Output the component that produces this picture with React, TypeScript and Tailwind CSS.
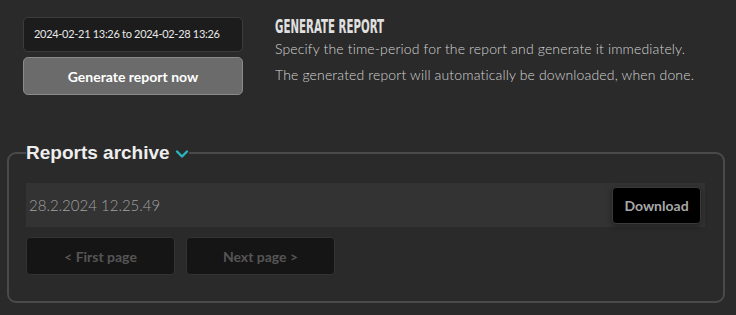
export default function App() {
  return (
    <div className="w-[736px] h-[315px] bg-[#2a2a2a] overflow-hidden" style={{ fontFamily: 'Lato, "Open Sans", sans-serif' }}>
      <div className="flex pl-[23px] pt-[17px]">
        <div className="flex flex-col gap-[5px] w-[220px]">
          <div className="h-[35px] flex items-center px-[10px] bg-[#1c1c1c] border border-[#3c3c3c] rounded-[5px] text-[11px] tracking-[-0.3px] whitespace-nowrap text-[#e8e8e8]">
            2024-02-21 13:26 to 2024-02-28 13:26
          </div>
          <button className="h-[38px] bg-[#6b6b6b] border border-[#8a8a8a] rounded-[5px] text-[14px] font-bold text-white">
            Generate report now
          </button>
        </div>
        <div className="ml-[32px]">
          <h2
            className="text-[19px] leading-[18px] font-bold text-[#e0e0e0] uppercase whitespace-nowrap"
            style={{ fontFamily: '"DejaVu Sans Condensed", "Liberation Sans Narrow", sans-serif', transform: 'scaleX(0.6)', transformOrigin: 'left' }}
          >
            Generate Report
          </h2>
          <p className="mt-[5px] text-[14px] leading-[18px] font-light tracking-[0.15px] text-[#d4d4d4]">
            Specify the time-period for the report and generate it immediately.
          </p>
          <p className="mt-[8px] text-[14px] leading-[18px] font-light tracking-[0.15px] text-[#d4d4d4]">
            The generated report will automatically be downloaded, when done.
          </p>
        </div>
      </div>

      <fieldset className="ml-[7px] mr-[11px] mt-[48px] h-[160px] border-2 border-[#4a4a4a] rounded-[9px] pl-[17px] pr-[17px] pt-[20px]">
        <legend className="px-0 flex items-center gap-[5px] text-[19px] font-bold text-[#eeeeee] leading-[20px]" style={{ fontFamily: '"Liberation Sans", Arial, sans-serif' }}>
          Reports archive
          <svg width="14" height="10" viewBox="0 0 14 10" fill="none" stroke="#2bb5bf" strokeWidth="2.4" strokeLinecap="round" strokeLinejoin="round" className="mt-[2px]">
            <path d="M2 2.5 L7 7.5 L12 2.5" />
          </svg>
        </legend>
        <div className="h-[44px] mr-[1px] bg-[#333333] flex items-center justify-between pl-[3px] pr-[4px]">
          <span className="text-[15px] font-light text-[#a0a0a0]">28.2.2024 12.25.49</span>
          <button className="h-[37px] w-[89px] bg-black border border-[#3a3a3a] rounded-[4px] text-[14px] font-bold text-[#a8a8a8] shadow-[0_2px_6px_rgba(0,0,0,0.4)]">
            Download
          </button>
        </div>
        <div className="flex gap-[11px] mt-[10px]">
          <button className="h-[38px] w-[149px] bg-[#151515] border border-[#333333] rounded-[4px] text-[14px] font-bold text-[#555555]">
            &lt; First page
          </button>
          <button className="h-[38px] w-[149px] bg-[#151515] border border-[#333333] rounded-[4px] text-[14px] font-bold text-[#555555]">
            Next page &gt;
          </button>
        </div>
      </fieldset>
    </div>
  )
}
